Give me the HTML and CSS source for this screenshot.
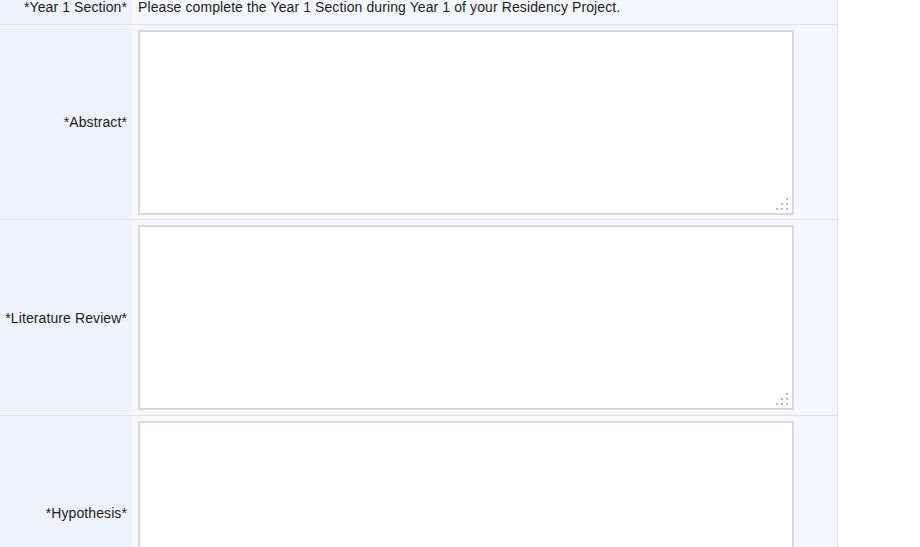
FILE: index.html
```html
<!DOCTYPE html>
<html>
<head>
<meta charset="utf-8">
<link rel="stylesheet" href="styles.css">
</head>
<body>
<div class="form">
  <div class="row row-intro">
    <div class="label">*Year 1 Section*</div>
    <div class="value">Please complete the Year 1 Section during Year 1 of your Residency Project.</div>
  </div>
  <div class="row">
    <div class="label">*Abstract*</div>
    <div class="value">
      <div class="ta-wrap">
        <textarea class="ta"></textarea>
        <svg class="grip" width="14" height="14" viewBox="0 0 14 14"><rect x="10" y="0" width="2" height="2"/><rect x="5" y="5" width="2" height="2"/><rect x="10" y="5" width="2" height="2"/><rect x="0" y="10" width="2" height="2"/><rect x="5" y="10" width="2" height="2"/><rect x="10" y="10" width="2" height="2"/></svg>
      </div>
    </div>
  </div>
  <div class="row row-tall">
    <div class="label">*Literature Review*</div>
    <div class="value">
      <div class="ta-wrap">
        <textarea class="ta"></textarea>
        <svg class="grip" width="14" height="14" viewBox="0 0 14 14"><rect x="10" y="0" width="2" height="2"/><rect x="5" y="5" width="2" height="2"/><rect x="10" y="5" width="2" height="2"/><rect x="0" y="10" width="2" height="2"/><rect x="5" y="10" width="2" height="2"/><rect x="10" y="10" width="2" height="2"/></svg>
      </div>
    </div>
  </div>
  <div class="row">
    <div class="label">*Hypothesis*</div>
    <div class="value">
      <div class="ta-wrap">
        <textarea class="ta"></textarea>
        <svg class="grip" width="14" height="14" viewBox="0 0 14 14"><rect x="10" y="0" width="2" height="2"/><rect x="5" y="5" width="2" height="2"/><rect x="10" y="5" width="2" height="2"/><rect x="0" y="10" width="2" height="2"/><rect x="5" y="10" width="2" height="2"/><rect x="10" y="10" width="2" height="2"/></svg>
      </div>
    </div>
  </div>
</div>
</body>
</html>
```

FILE: styles.css
```css
html, body {
  margin: 0;
  padding: 0;
  overflow: hidden;
  background: #ffffff;
}
body {
  font-family: "Liberation Sans", Arial, sans-serif;
  font-size: 14px;
  line-height: 16px;
  letter-spacing: 0.1px;
  color: #1c1c1c;
}
.form {
  width: 837px;
  border-right: 1px solid #dfe3e8;
  margin-top: -9px;
}
.row {
  display: grid;
  grid-template-columns: 132px 1fr;
  border-bottom: 1px solid #dfe3e8;
}
.label {
  background: #eef3fb;
  display: flex;
  align-items: center;
  justify-content: flex-end;
  padding-right: 5px;
  white-space: nowrap;
}
.value {
  background: #f4f8fc;
  padding: 5px 6px 4px;
}
.row-tall .value {
  padding-bottom: 5px;
}
.row-intro .label,
.row-intro .value {
  padding-top: 8px;
  padding-bottom: 9px;
}
.ta-wrap {
  position: relative;
  width: 656px;
  height: 185px;
}
.ta {
  display: block;
  box-sizing: border-box;
  width: 656px;
  height: 185px;
  margin: 0;
  border: 2px solid #d9d9d9;
  background: #ffffff;
  resize: none;
  outline: none;
  font: inherit;
}
.grip {
  position: absolute;
  right: 4px;
  bottom: 3px;
  fill: #bdbdbd;
}
```
